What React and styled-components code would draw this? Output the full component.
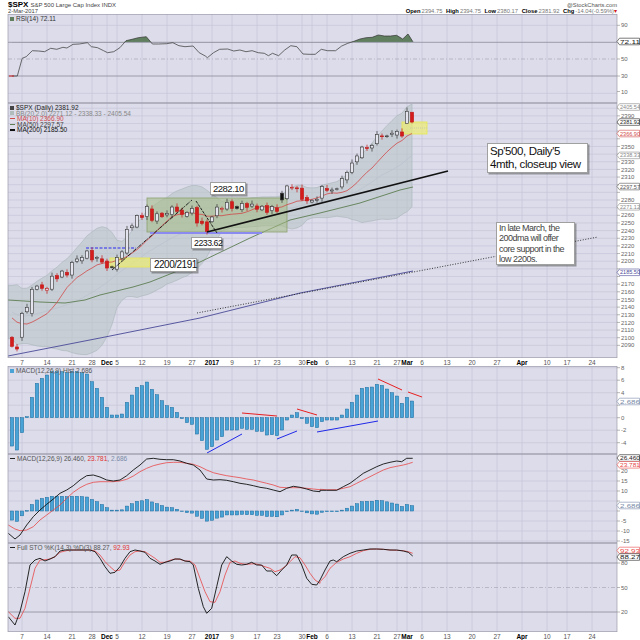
import React from "react";
import styled, { createGlobalStyle } from "styled-components";

// ---------- page chrome ----------
const GlobalStyle = createGlobalStyle`
  html, body { margin: 0; padding: 0; background: #fff; }
  body { font-family: "Liberation Sans", Arial, sans-serif; }
`;

const Page = styled.div`
  width: 640px;
  height: 640px;
  display: flex;
  flex-direction: column;
  background: #fff;
  overflow: hidden;
`;

const Header = styled.header`
  flex: none;
  height: 14px;
  padding: 0 23px 0 8px;
  display: grid;
  grid-template-columns: 1fr auto;
  grid-template-rows: 8px 6px;
  align-items: end;
  font-size: 5.8px;
  line-height: 6px;
  color: #444;
  white-space: nowrap;
`;

const Title = styled.div`
  align-self: start;
  line-height: 9px;
  font-size: 6px;
  b {
    font-size: 8px;
    color: #000;
    margin-right: 2px;
  }
`;

const Credit = styled.div`
  text-align: right;
  color: #555;
`;

const Quote = styled.div`
  text-align: right;
  color: #777;
  b {
    color: #000;
    margin: 0 1px 0 2px;
  }
  i {
    font-style: normal;
    color: #d02020;
  }
`;

const Panel = styled.section`
  position: relative;
  flex: none;
  height: ${(p) => p.$h}px;
`;

const ChartSvg = styled.svg`
  display: block;
  font-family: "Liberation Sans", Arial, sans-serif;
`;

const AxisLayer = styled.svg`
  position: absolute;
  left: 0;
  top: 0;
  font-family: "Liberation Sans", Arial, sans-serif;
  pointer-events: none;
`;

const Legend = styled.div`
  position: absolute;
  left: 10px;
  top: ${(p) => p.$top ?? 1}px;
  font-size: 6.5px;
  line-height: 5.5px;
  color: #444;
  white-space: nowrap;
  pointer-events: none;
`;

const LegendRow = styled.div`
  display: flex;
  align-items: center;
  color: ${(p) => p.$color || "#444"};
  span.red { color: #e03030; }
  span.blue { color: #7a8aa8; }
`;

const Swatch = styled.span`
  display: inline-block;
  width: ${(p) => p.$w ?? 5}px;
  height: ${(p) => p.$h ?? 1}px;
  background: ${(p) => p.$color};
  margin-right: 2px;
`;

const Callout = styled.div`
  position: absolute;
  left: ${(p) => p.$x}px;
  top: ${(p) => p.$y}px;
  width: ${(p) => p.$w}px;
  height: ${(p) => p.$hh}px;
  box-sizing: border-box;
  background: #fff;
  border: 1px solid #a0a0a0;
  box-shadow: 1.5px 1.5px 0 rgba(60, 60, 60, 0.45);
  padding: ${(p) => p.$pad ?? "0 2px"};
  font-size: ${(p) => p.$fs}px;
  line-height: ${(p) => p.$lh}px;
  letter-spacing: ${(p) => p.$ls ?? -0.5}px;
  color: ${(p) => p.$color || "#111"};
  white-space: nowrap;
`;

// ---------- geometry ----------
const L = 8;
const R = 617;
const xi = (i) => 12 + 5 * i;
const yP = (p) => 104 + (2405.5 - p) * 0.765;
const poly = (pts) => pts.map((p) => p[0].toFixed(1) + "," + p[1].toFixed(1)).join(" ");
const traced = (arr, ox, oy) => {
  const out = [];
  for (let k = 0; k < arr.length; k += 2) out.push([ox + arr[k] / 3, oy + arr[k + 1] / 3]);
  return out;
};

const WEEKS = [2, 7, 12, 16, 19, 21, 26, 31, 36, 40, 44, 49, 53, 58, 60, 63, 68, 73, 77, 79, 82, 87, 92, 97, 102, 107, 111, 116];
const DATES = [
  [2, "7"], [7, "14"], [12, "21"], [16, "28"], [19, "Dec", 1], [21, "5"], [26, "12"], [31, "19"], [36, "27"],
  [40, "2017", 1], [44, "9"], [49, "17"], [53, "23"], [58, "30"], [60, "Feb", 1], [63, "6"], [68, "13"],
  [73, "21"], [77, "27"], [79, "Mar", 1], [82, "6"], [87, "13"], [92, "20"], [97, "27"], [102, "Apr", 1],
  [107, "10"], [111, "17"], [116, "24"],
];

// ---------- data ----------
const PRE = [2159.7, 2160.8, 2153.7, 2163.7, 2136.7, 2139.2, 2132.6, 2133.0, 2126.5, 2139.6, 2144.3, 2141.3, 2141.2, 2151.3, 2143.2, 2139.4, 2133.0, 2126.4, 2126.2, 2111.7, 2097.9];
const CLOSES = [
  2088.7, 2085.2, 2131.5, 2139.6, 2163.3, 2167.5, 2164.5, 2164.2, 2180.4, 2176.9, 2187.1, 2181.9, 2198.2, 2202.9, 2204.7, 2213.4, 2201.7, 2204.7, 2198.8,
  2191.1, 2191.95, 2204.7, 2212.2, 2241.4, 2246.2, 2259.5, 2256.96, 2271.7, 2253.3, 2262.0, 2258.1, 2262.5, 2270.8, 2265.2, 2260.96, 2263.8, 2268.9, 2249.9, 2249.3, 2238.8,
  2257.8, 2270.75, 2269.0, 2276.98, 2268.9, 2268.9, 2275.3, 2270.4, 2274.6, 2267.9, 2271.9, 2263.7, 2271.3, 2265.2, 2280.1, 2298.4, 2296.7, 2294.7, 2280.9, 2278.9,
  2279.6, 2280.85, 2297.4, 2292.6, 2293.1, 2294.7, 2307.9, 2316.1, 2328.3, 2337.6, 2349.25, 2347.2, 2351.2, 2365.4, 2362.8, 2363.8, 2367.3, 2369.75, 2363.6,
  2395.96, 2381.92,
];
const OPEN_FIX = { 0: 2100.6, 2: 2100.6, 4: 2131.6, 19: 2200.2, 23: 2210.7, 28: 2268.3, 37: 2270.2, 39: 2251.4, 40: 2251.6, 54: 2288.9, 79: 2380.1, 80: 2394.75 };

const ALL = PRE.concat(CLOSES);
const OFF = PRE.length;
const CANDLES = CLOSES.map((c, i) => {
  const prev = ALL[OFF + i - 1];
  const o = OPEN_FIX[i] ?? prev + (((i * 37) % 7) - 3) * 0.8;
  let hi = Math.max(o, c) + 1.5 + ((i * 13) % 5) * 0.8;
  let lo = Math.min(o, c) - 1.5 - ((i * 17) % 5) * 0.8;
  if (i === 79) { hi = 2400.98; lo = 2380.13; }
  if (i === 80) { hi = 2394.75; lo = 2380.17; }
  return { o, c, hi, lo, prev };
});

const mean = (a) => a.reduce((s, v) => s + v, 0) / a.length;
const MA10 = CLOSES.map((_, i) => mean(ALL.slice(OFF + i - 9, OFF + i + 1)));
const BB = CLOSES.map((_, i) => {
  const w = ALL.slice(OFF + i - 19, OFF + i + 1);
  const m = mean(w);
  const sd = Math.sqrt(mean(w.map((v) => (v - m) ** 2)));
  return { m, up: m + 2 * sd, lo: m - 2 * sd };
});

const MA50 = [[8, 300], [40, 302], [65, 303], [85, 300], [100, 295], [133, 287], [150, 282], [200, 262], [250, 238], [290, 220], [320, 213], [360, 203], [400, 190], [413, 187]];
const MA200 = [[8, 356], [100, 338], [200, 318], [300, 293], [413, 271]];

// rsi trace (x in zoom display units)
const RSI_RAW = [25,228,38,228,50,175,60,170,75,152,90,153,105,155,120,145,135,148,150,142,160,144,175,133,190,132,210,128,220,140,235,143,250,152,260,158,275,155,290,143,305,122,320,118,335,113,355,110,370,132,385,132,405,131,420,128,435,137,450,140,470,138,485,158,500,168,505,173,520,158,535,148,555,147,570,153,585,150,600,155,615,152,630,158,645,160,655,167,665,160,680,167,695,150,710,137,725,140,740,162,755,163,770,163,785,148,800,152,820,152,835,138,850,130,865,124,880,117,895,113,910,112,925,105,940,108,955,108,970,106,985,117,998,102,1010,125];
const RSI = [];
for (let k = 0; k < RSI_RAW.length; k += 2) RSI.push([12 + (RSI_RAW[k] - 25) * 0.407, RSI_RAW[k + 1] / 3]);
const RSI70 = 42.3;

// macd histogram (traced bar tops, zero at 383)
const HIST_RAW = [
  468,480,428,380,322,280,265,255,245,245,245,248,245,245,248,252,275,295,322,352,
  375,375,372,337,315,292,287,276,298,314,332,347,352,367,386,398,403,432,452,478,
  470,450,440,420,420,420,415,418,418,424,424,435,434,437,420,390,375,368,386,400,
  410,413,395,390,390,390,375,357,337,315,295,292,291,283,286,297,308,318,340,322,333,
];
const HIST = HIST_RAW.map((v) => (383 - v) / 18.75);

const MACD_LINE = traced([25,235,45,252,60,240,80,210,100,185,120,165,140,148,160,132,180,115,200,105,220,92,240,75,260,62,280,60,300,66,320,75,340,78,360,75,380,62,400,45,420,30,440,12,460,10,480,13,500,14,520,14,540,18,560,25,580,30,600,45,620,72,640,75,660,74,680,76,700,80,720,85,740,88,760,92,780,97,800,100,820,105,840,110,860,100,880,94,900,97,920,102,940,108,960,110], 0, 455)
  .concat(traced([0,106,20,106,50,106,70,95,90,85,110,70,130,55,150,45,170,35,190,27,210,22,230,18,245,20,260,10,278,10], 320, 455));
const MACD_SIG = traced([25,210,45,222,60,227,80,225,100,215,120,195,140,180,160,165,180,150,200,130,220,112,240,98,260,88,280,82,300,80,320,80,340,80,360,78,380,73,400,63,420,50,440,40,460,32,480,27,500,23,520,22,540,22,560,25,580,28,600,35,620,45,640,53,660,58,680,62,700,65,720,68,740,72,760,75,780,80,800,85,820,90,840,97,860,98,880,98,900,98,920,100,940,102,960,104], 0, 455)
  .concat(traced([0,103,20,104,50,104,70,100,90,95,110,85,130,75,150,65,170,55,190,45,210,38,230,34,250,30,265,26,278,22], 320, 455));

const STO_K = traced([25,485,45,510,60,470,75,410,90,330,105,315,120,310,135,318,150,312,165,305,180,288,195,285,210,285,225,285,240,285,270,285,285,290,300,310,315,335,330,355,345,352,360,335,375,310,390,290,405,285,420,288,435,292,450,310,465,318,480,328,495,322,510,318,525,312,540,312,555,318,570,320,580,330,595,400,610,455,620,475,635,460,650,395,665,330,680,305,695,318,710,328,725,330,740,328,755,322,770,330,785,330,800,348,815,348,830,362,845,345,860,330,875,300,890,300,905,330,920,370,935,388,950,390,960,375], 0, 455)
  .concat(traced([0,375,15,345,30,318,40,315,50,320,70,305,90,295,110,288,130,285,150,282,170,282,190,283,210,285,230,285,250,288,265,292,278,303], 320, 455));
const STO_D = traced([25,470,45,490,60,490,75,460,90,400,105,340,120,315,135,314,150,312,165,305,180,292,195,288,210,285,270,285,285,288,300,300,315,320,330,335,345,348,360,345,375,320,390,300,405,290,420,288,435,290,450,300,465,310,480,322,495,322,510,316,525,312,540,313,555,318,570,318,585,330,600,370,615,410,630,440,645,442,660,410,675,360,690,322,705,318,720,325,735,328,750,327,765,326,780,330,795,335,810,340,825,350,840,345,855,335,870,320,885,305,900,308,915,330,930,355,945,375,960,385], 0, 455)
  .concat(traced([0,380,15,365,30,340,50,322,70,312,90,305,110,295,130,287,150,283,170,282,190,283,210,285,230,286,250,287,265,290,278,295], 320, 455));

// ---------- svg pieces ----------
const Frame = ({ top, h, id, children, hlines = [] }) => (
  <ChartSvg width={640} height={h} viewBox={`0 ${top} 640 ${h}`}>
    <defs>
      <clipPath id={id}>
        <rect x={L} y={top} width={R - L} height={h} />
      </clipPath>
    </defs>
    <rect x={L} y={top} width={R - L} height={h} fill="#dcdcea" />
    {hlines.map((y) => (
      <line key={"h" + y} x1={L} x2={R} y1={y} y2={y} stroke="#c6c6da" strokeWidth={0.7} />
    ))}
    {WEEKS.map((i) => (
      <line key={"v" + i} x1={xi(i)} x2={xi(i)} y1={top} y2={top + h} stroke="#c6c6da" strokeWidth={0.8} />
    ))}
    <g clipPath={`url(#${id})`}>{children}</g>
    <rect x={L} y={top + 0.3} width={R - L} height={h - 0.6} fill="none" stroke="#9a9aaa" strokeWidth={0.7} />
  </ChartSvg>
);

const SvgOverlay = ({ top, h, children }) => (
  <AxisLayer width={640} height={h} viewBox={`0 ${top} 640 ${h}`}>{children}</AxisLayer>
);

// axis ticks; labels hidden where a value box sits on top of them
const Ticks = ({ items, avoid = [] }) =>
  items.map(([y, t]) => {
    const hidden = avoid.some((a) => Math.abs(a - y) < 6);
    return (
      <g key={t}>
        <line x1={R} x2={R + 3} y1={y} y2={y} stroke="#888" strokeWidth={0.6} />
        {!hidden && (
          <text x={R + 4} y={y + 2.1} fontSize={6} fill="#666">{t}</text>
        )}
      </g>
    );
  });

const ValueBox = ({ y, t, color }) => (
  <g>
    <polygon points={`${R},${y} ${R + 2.5},${y - 3.3} 639.5,${y - 3.3} 639.5,${y + 3.3} ${R + 2.5},${y + 3.3}`} fill="#fff" stroke={color} strokeWidth={0.6} />
    <text x={R + 3} y={y + 2.1} fontSize={5.8} fill={color} textLength={20} lengthAdjust="spacingAndGlyphs">{t}</text>
  </g>
);

const Line = ({ pts, color, w = 0.8, dash }) => (
  <polyline points={poly(pts)} fill="none" stroke={color} strokeWidth={w} strokeDasharray={dash} strokeLinejoin="round" />
);

const DateAxis = ({ top }) => (
  <ChartSvg width={640} height={8} viewBox={`0 ${top} 640 8`}>
    <rect x={0} y={top} width={640} height={8} fill="#fff" />
    {DATES.map(([i, t, b]) => (
      <text key={t + i} x={xi(i)} y={top + 6.5} fontSize={6.5} textAnchor="middle" fill={b ? "#000" : "#555"} fontWeight={b ? 700 : 400}>
        {t}
      </text>
    ))}
  </ChartSvg>
);

// ---------- panels ----------
const RsiPanel = () => {
  const area = [[RSI[0][0], RSI70], ...RSI, [RSI[RSI.length - 1][0], RSI70]];
  return (
    <Panel $h={89}>
      <Frame top={14} h={89} id="rsi" hlines={[25.3, 93.3]}>
        <clipPath id="rsiTop">
          <rect x={L} y={14} width={R - L} height={RSI70 - 14} />
        </clipPath>
        <polygon points={poly(area)} fill="#5f7f5f" clipPath="url(#rsiTop)" />
        <line x1={L} x2={R} y1={RSI70} y2={RSI70} stroke="#8a8a9a" strokeWidth={0.8} />
        <line x1={L} x2={R} y1={76} y2={76} stroke="#8a8a9a" strokeWidth={0.8} />
        <line x1={L} x2={R} y1={59} y2={59} stroke="#a8a8b8" strokeWidth={0.7} strokeDasharray="4 2 1 2" />
        <Line pts={RSI} color="#333" w={0.7} />
        <line x1={9} x2={14} y1={76} y2={76} stroke="#d02020" strokeWidth={1} />
      </Frame>
      <Legend $top={2}>
        <LegendRow $color="#333">
          <Swatch $w={4} $h={4} $color="#5f7f5f" />RSI(14) 72.11
        </LegendRow>
      </Legend>
      <SvgOverlay top={14} h={89}>
        <Ticks items={[[25.3, "90"], [59, "50"], [76, "30"], [91.5, "10"]]} />
        <ValueBox y={41.5} t="72.11" color="#222" />
      </SvgOverlay>
    </Panel>
  );
};

const Candle = ({ i, d }) => {
  const x = xi(i);
  const up = d.c >= d.o;
  const down = d.c < d.prev;
  const top = yP(Math.max(d.o, d.c));
  const bot = yP(Math.min(d.o, d.c));
  const bh = Math.max(bot - top, 0.8);
  const stroke = down ? "#c01818" : "#333";
  const fill = up ? "#e4e4ee" : down ? "#d41c1c" : "#111";
  return (
    <g>
      <line x1={x} x2={x} y1={yP(d.hi)} y2={top} stroke={stroke} strokeWidth={0.7} />
      <line x1={x} x2={x} y1={top + bh} y2={yP(d.lo)} stroke={stroke} strokeWidth={0.7} />
      <rect x={x - 1.6} y={top} width={3.2} height={bh} fill={fill} stroke={stroke} strokeWidth={0.6} />
    </g>
  );
};

const PRICE_TICKS = [];
for (let p = 2090; p <= 2400; p += 10) PRICE_TICKS.push([yP(p), String(p)]);
const PRICE_BOXES = [
  [2405.54, "#888"], [2381.92, "#222"], [2366.9, "#d04a4a"], [2338.33, "#888"],
  [2297.57, "#555"], [2271.12, "#888"], [2185.5, "#4a4a98"],
];

const PricePanel = () => {
  const up = BB.map((b, i) => [xi(i), yP(b.up)]);
  const lo = BB.map((b, i) => [xi(i), yP(b.lo)]);
  const mid = BB.map((b, i) => [xi(i), yP(b.m)]);
  const band = [[L, up[0][1]], ...up, ...lo.slice().reverse(), [L, lo[0][1]]];
  const ma10 = MA10.map((v, i) => [xi(i), yP(v)]);
  const boxY = (v) => Math.max(yP(v), 107);
  return (
    <Panel $h={255}>
      <Frame top={103} h={255} id="price" hlines={PRICE_TICKS.map((t) => t[0])}>
        <polygon points={poly(band)} fill="#b9c5c6" fillOpacity={0.6} stroke="#aab6b8" strokeWidth={0.6} />
        <Line pts={mid} color="#b8c0cc" w={0.6} />
        <Line pts={MA200} color="#4a4a98" w={0.9} />
        <line x1={197} y1={313} x2={598} y2={237} stroke="#222" strokeWidth={0.9} strokeDasharray="1 1.6" />
        <Line pts={MA50} color="#5e7e52" w={0.9} />
        <rect x={147} y={198} width={140} height={34} fill="#a4bc84" fillOpacity={0.55} stroke="#8ca070" strokeWidth={0.8} />
        <line x1={150} x2={262} y1={233} y2={233} stroke="#8a8af0" strokeWidth={2} />
        <line x1={86} x2={136} y1={248} y2={248} stroke="#2a2af0" strokeWidth={1.1} strokeDasharray="3 1.5" />
        <rect x={110} y={258} width={40} height={9} fill="#ecec70" fillOpacity={0.7} stroke="#e8e850" strokeWidth={0.8} />
        <rect x={402} y={122} width={25} height={12} fill="#ecec70" fillOpacity={0.7} stroke="#e8e850" strokeWidth={0.8} />
        <line x1={410} x2={427} y1={128} y2={128} stroke="#bbb" strokeWidth={0.6} strokeDasharray="1 1" />
        <Line pts={ma10} color="#d04a4a" w={0.8} />
        {CANDLES.map((d, i) => <Candle key={i} i={i} d={d} />)}
        <line x1={112} y1={270} x2={192} y2={200} stroke="#111" strokeWidth={0.9} strokeDasharray="4 1 1 1" />
        <line x1={196} y1={201} x2={217} y2={233} stroke="#111" strokeWidth={0.9} strokeDasharray="3 1" />
        <line x1={207} y1={232} x2={448} y2={171} stroke="#111" strokeWidth={1.7} />
      </Frame>
      <Legend $top={2}>
        <LegendRow $color="#222">
          <Swatch $w={4} $h={4} $color="#444" />$SPX (Daily) 2381.92
        </LegendRow>
        <LegendRow $color="#888">
          <Swatch $w={4} $h={4} $color="#b0bcbc" />BB(20,2.0) 2271.12 - 2338.33 - 2405.54
        </LegendRow>
        <LegendRow $color="#d04a4a">
          <Swatch $color="#d04a4a" />MA(10) 2366.90
        </LegendRow>
        <LegendRow $color="#444">
          <Swatch $color="#5e7e52" />MA(50) 2297.57
        </LegendRow>
        <LegendRow $color="#111">
          <Swatch $h={1.5} $color="#111" />MA(200) 2185.50
        </LegendRow>
      </Legend>
      <Callout $x={210} $y={79} $w={36} $hh={13} $fs={9.5} $lh={11}>2282.10</Callout>
      <Callout $x={191} $y={134} $w={31} $hh={12} $fs={8.8} $lh={10}>2233.62</Callout>
      <Callout $x={150} $y={155} $w={47} $hh={14} $fs={10} $lh={12} $pad="0 3px">2200/2191</Callout>
      <Callout $x={487} $y={40} $w={101} $hh={30} $fs={11.5} $lh={13} $ls={-0.4} $pad="1px 2px">
        Sp'500, Daily'5
        <br />
        4mth, closeup view
      </Callout>
      <Callout $x={496} $y={119} $w={79} $hh={43} $fs={9} $lh={10.3} $pad="0 2px" $color="#444">
        In late March, the
        <br />
        200dma will offer
        <br />
        core support in the
        <br />
        low 2200s.
      </Callout>
      <SvgOverlay top={103} h={255}>
        <Ticks items={PRICE_TICKS} avoid={PRICE_BOXES.map((b) => boxY(b[0]))} />
        {PRICE_BOXES.map(([v, c]) => (
          <ValueBox key={v} y={boxY(v)} t={v.toFixed(2)} color={c} />
        ))}
      </SvgOverlay>
    </Panel>
  );
};

const Bars = ({ zero, scale }) =>
  HIST.map((v, i) => {
    const y = zero - v * scale;
    return (
      <rect key={i} x={xi(i) - 1.7} y={Math.min(y, zero)} width={3.4} height={Math.max(Math.abs(y - zero), 0.5)} fill="#4aa3d6" stroke="#1d6c9e" strokeWidth={0.5} />
    );
  });

const HIST_Y = (v) => 417.7 - v * 6.25;
const HistPanel = () => (
  <Panel $h={88}>
    <Frame top={366} h={88} id="hist" hlines={[8, 6, 4, 2, 0, -2, -4].map(HIST_Y)}>
      <Bars zero={417.7} scale={6.25} />
      <line x1={207} y1={453} x2={242} y2={434} stroke="#2028e8" strokeWidth={1} />
      <line x1={277} y1={439} x2={297} y2={431} stroke="#2028e8" strokeWidth={1} />
      <line x1={317} y1={432} x2={378} y2={421} stroke="#2028e8" strokeWidth={1} />
      <line x1={242} y1={413} x2={277} y2={416} stroke="#e82020" strokeWidth={1} />
      <line x1={297} y1={409} x2={317} y2={415} stroke="#e82020" strokeWidth={1} />
      <line x1={378} y1={379} x2={402} y2={390} stroke="#e82020" strokeWidth={1} />
      <line x1={408} y1={392} x2={422} y2={397} stroke="#e82020" strokeWidth={1} />
    </Frame>
    <Legend $top={2}>
      <LegendRow $color="#555">
        <Swatch $w={4} $h={4} $color="#4aa3d6" />MACD(12,26,9) Hist 2.686
      </LegendRow>
    </Legend>
    <SvgOverlay top={366} h={88}>
      <Ticks
        items={[[HIST_Y(8), "8"], [HIST_Y(6), "6"], [HIST_Y(4), "4"], [HIST_Y(2), "2"], [HIST_Y(0), "0"], [HIST_Y(-2), "-2"], [HIST_Y(-4), "-4"]]}
        avoid={[401.5]}
      />
      <ValueBox y={401.5} t="2.686" color="#7a8aa8" />
    </SvgOverlay>
  </Panel>
);

const MACD_Y = (v) => 511 - v * 2;
const MacdPanel = () => (
  <Panel $h={89}>
    <Frame top={454} h={89} id="macd" hlines={[20, 15, 10, 5, 0, -5, -10, -15].map(MACD_Y)}>
      <Bars zero={511} scale={2} />
      <Line pts={MACD_SIG} color="#e84848" w={0.8} />
      <Line pts={MACD_LINE} color="#111" w={0.9} />
    </Frame>
    <Legend $top={1.5}>
      <LegendRow $color="#555">
        <Swatch $color="#222" $h={1.2} />MACD(12,26,9) 26.460,&nbsp;<span className="red">23.781</span>,&nbsp;
        <span className="blue">2.686</span>
      </LegendRow>
    </Legend>
    <SvgOverlay top={454} h={89}>
      <Ticks
        items={[[MACD_Y(20), "20"], [MACD_Y(15), "15"], [MACD_Y(10), "10"], [MACD_Y(5), "5"], [MACD_Y(0), "0"], [MACD_Y(-5), "-5"], [MACD_Y(-10), "-10"], [MACD_Y(-15), "-15"]]}
        avoid={[464.5, 505.5]}
      />
      <ValueBox y={458} t="26.460" color="#222" />
      <ValueBox y={464.8} t="23.781" color="#e84848" />
      <ValueBox y={505.5} t="2.686" color="#7a8aa8" />
    </SvgOverlay>
  </Panel>
);

const STO_Y = (v) => 563 + (80 - v) * 0.817;
const StoPanel = () => (
  <Panel $h={89}>
    <Frame top={543} h={89} id="sto" hlines={[]}>
      <line x1={L} x2={R} y1={STO_Y(80)} y2={STO_Y(80)} stroke="#8a8a9a" strokeWidth={0.8} />
      <line x1={L} x2={R} y1={STO_Y(20)} y2={STO_Y(20)} stroke="#8a8a9a" strokeWidth={0.8} />
      <line x1={L} x2={R} y1={STO_Y(50)} y2={STO_Y(50)} stroke="#a8a8b8" strokeWidth={0.7} strokeDasharray="4 2 1 2" />
      <Line pts={STO_D} color="#e84848" w={0.8} />
      <Line pts={STO_K} color="#111" w={0.9} />
    </Frame>
    <Legend $top={1.5}>
      <LegendRow $color="#555">
        <Swatch $color="#222" $h={1.2} />Full STO %K(14,3) %D(3) 88.27,&nbsp;<span className="red">92.93</span>
      </LegendRow>
    </Legend>
    <SvgOverlay top={543} h={89}>
      <Ticks items={[[STO_Y(80), "80"], [STO_Y(50), "50"], [STO_Y(20), "20"]]} />
      <ValueBox y={550.5} t="92.93" color="#e84848" />
      <ValueBox y={557} t="88.27" color="#222" />
    </SvgOverlay>
  </Panel>
);

export default function App() {
  return (
    <Page>
      <GlobalStyle />
      <Header>
        <Title>
          <b>$SPX</b>S&amp;P 500 Large Cap Index INDX
        </Title>
        <Credit>@StockCharts.com</Credit>
        <div>2-Mar-2017</div>
        <Quote>
          <b>Open</b>2394.75 <b>High</b>2394.75 <b>Low</b>2380.17 <b>Close</b>2381.92 <b>Chg</b>-14.04(-0.59%)<i>▾</i>
        </Quote>
      </Header>
      <RsiPanel />
      <PricePanel />
      <Panel $h={8}>
        <DateAxis top={358} />
      </Panel>
      <HistPanel />
      <MacdPanel />
      <StoPanel />
      <Panel $h={8}>
        <DateAxis top={632} />
      </Panel>
    </Page>
  );
}
